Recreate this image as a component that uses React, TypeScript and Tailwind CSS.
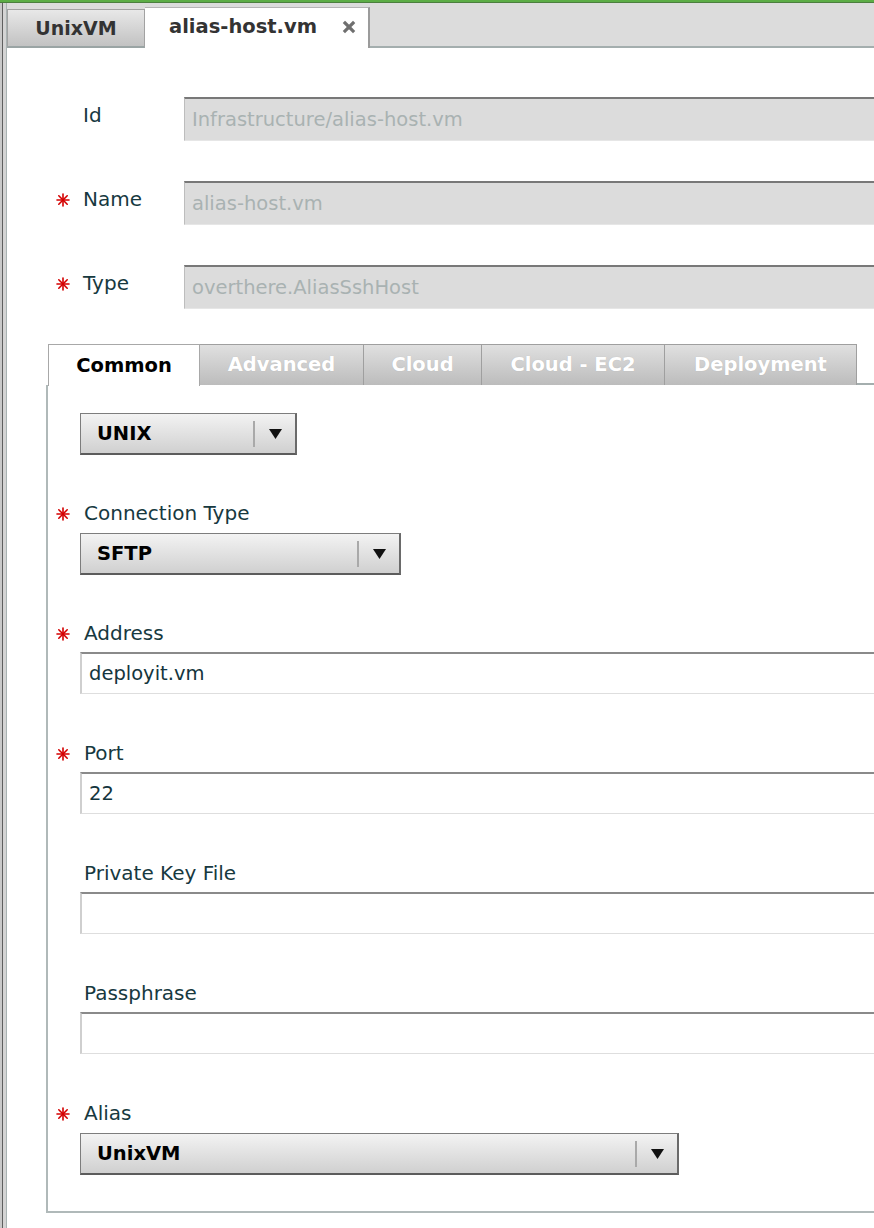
import React from "react";

const Star = () => (
  <svg width="14" height="14" viewBox="0 0 14 14" className="mt-[6px]">
    <g stroke="#d40000" strokeWidth="1.6" strokeLinecap="round">
      <line x1="7" y1="1" x2="7" y2="13" />
      <line x1="1" y1="7" x2="13" y2="7" />
      <line x1="2.8" y1="2.8" x2="11.2" y2="11.2" />
      <line x1="11.2" y1="2.8" x2="2.8" y2="11.2" />
    </g>
  </svg>
);

const Arrow = () => (
  <svg width="13" height="10" viewBox="0 0 13 10">
    <path d="M0 0 H13 L6.5 10 Z" fill="#111" />
  </svg>
);

function Select({ value, width }: { value: string; width: string }) {
  return (
    <div
      className={`flex items-center h-[42px] border border-[#7d7d7d] border-b-2 border-b-[#5c5c5c] border-r-2 border-r-[#6a6a6a] bg-linear-to-b from-[#f3f3f3] to-[#d0d0d0] ${width}`}
    >
      <span className="flex-1 pl-[16px] font-bold text-black text-[19.5px]">{value}</span>
      <span className="w-[2px] h-[26px] bg-[#a9a9a9]" />
      <span className="w-[40px] flex justify-center">
        <Arrow />
      </span>
    </div>
  );
}

function TextInput({ value }: { value?: string }) {
  return (
    <div className="h-[42px] w-[820px] flex items-center pl-[7px] bg-white border-t-2 border-t-[#8a8a8a] border-l-2 border-l-[#cfcfcf] border-b border-b-[#dedede] text-[19.5px] text-[#14353d]">
      {value}
    </div>
  );
}

function FieldLabel({ text, required }: { text: string; required?: boolean }) {
  return (
    <div className="flex h-[24px] items-start">
      <div className="w-[28px] shrink-0">{required && <Star />}</div>
      <span className="text-[20px] leading-[24px] text-[#17393f]">{text}</span>
    </div>
  );
}

function DisabledRow({ label, value, required }: { label: string; value: string; required?: boolean }) {
  return (
    <div className="flex">
      <div className="w-[128px] shrink-0 flex pt-[6px]">
        <div className="w-[27px] shrink-0">{required && <Star />}</div>
        <span className="text-[20px] leading-[24px] text-[#17393f]">{label}</span>
      </div>
      <div className="h-[44px] w-[720px] shrink-0 flex items-center pl-[7px] bg-[#dcdcdc] border-t-2 border-t-[#787878] border-l border-l-[#bdbdbd] border-b border-b-[#e6e6e6] text-[19.5px] text-[#a9b2b2]">
        {value}
      </div>
    </div>
  );
}

const innerTabs = [
  { label: "Advanced", w: "w-[164px]" },
  { label: "Cloud", w: "w-[118px]" },
  { label: "Cloud - EC2", w: "w-[183px]" },
  { label: "Deployment", w: "w-[192px]" },
];

export default function App() {
  return (
    <div className="w-[874px] h-[1228px] bg-white overflow-hidden font-['DejaVu_Sans',sans-serif]">
      {/* top green strip */}
      <div className="h-[2px] bg-[#5cad46]" />
      <div className="h-[1px] bg-[#4b7f3e]" />

      <div className="flex h-[1225px]">
        {/* left window edge */}
        <div className="w-[2px] bg-[#c9c9c9]" />
        <div className="w-[1px] bg-[#5f5f5f]" />
        <div className="w-[3px] bg-[#d4d4d4]" />
        <div className="w-[1px] bg-[#a9b3b3]" />

        <div className="flex-1 flex flex-col overflow-hidden">
          {/* document tab bar */}
          <div className="h-[45px] bg-[#dcdcdc] border-b-2 border-[#a4aeae] flex items-end pt-[4px]">
            <div className="w-[138px] h-[39px] mb-[-2px] flex items-center justify-center border border-[#a2a2a2] border-b-[#9aa4a4] border-b-2 bg-linear-to-b from-[#e8e8e8] to-[#c2c2c2] font-bold text-[19px] text-[#333]">
              UnixVM
            </div>
            <div className="w-[225px] h-[41px] mb-[-2px] flex items-center bg-white border-t border-t-[#b5b5b5] border-r-2 border-r-[#9b9b9b] pl-[24px] pb-[2px]">
              <span className="font-bold text-[19.5px] text-[#333]">alias-host.vm</span>
              <svg width="14" height="14" viewBox="0 0 14 14" className="ml-[25px]">
                <g stroke="#6f6f6f" strokeWidth="3.2" strokeLinecap="square">
                  <line x1="3" y1="3" x2="11" y2="11" />
                  <line x1="11" y1="3" x2="3" y2="11" />
                </g>
              </svg>
            </div>
          </div>

          {/* top form */}
          <div className="pt-[49px] pl-[49px] flex flex-col gap-[40px]">
            <DisabledRow label="Id" value="Infrastructure/alias-host.vm" />
            <DisabledRow label="Name" value="alias-host.vm" required />
            <DisabledRow label="Type" value="overthere.AliasSshHost" required />
          </div>

          {/* inner tabs */}
          <div className="mt-[35px] ml-[39px] flex items-end">
            <div className="w-[152px] h-[42px] ml-[2px] mb-[-1px] flex items-center justify-center bg-white border-t border-l border-r border-[#a8a8a8] font-bold text-[19.5px] text-black relative z-10">
              Common
            </div>
            {innerTabs.map((t) => (
              <div
                key={t.label}
                className={`${t.w} h-[41px] flex items-center justify-center border border-[#9f9f9f] border-l-0 border-b-0 bg-linear-to-b from-[#e0e0e0] to-[#bcbcbc] font-bold text-[19.5px] text-white [text-shadow:0_0_1px_rgba(0,0,0,0.15)]`}
              >
                {t.label}
              </div>
            ))}
            <div className="flex-1 border-b-2 border-[#a4aeae]" />
          </div>

          {/* tab panel */}
          <div className="ml-[39px] border-l-2 border-b-2 border-[#b0b9b9] pl-[8px] pt-[28px] pb-[36px] flex flex-col">
            <div className="ml-[24px]">
              <Select value="UNIX" width="w-[217px]" />
            </div>

            <div className="mt-[46px] flex flex-col gap-[8px]">
              <FieldLabel text="Connection Type" required />
              <div className="ml-[24px]">
                <Select value="SFTP" width="w-[321px]" />
              </div>
            </div>

            <div className="mt-[46px] flex flex-col gap-[7px]">
              <FieldLabel text="Address" required />
              <div className="ml-[24px]">
                <TextInput value="deployit.vm" />
              </div>
            </div>

            <div className="mt-[47px] flex flex-col gap-[7px]">
              <FieldLabel text="Port" required />
              <div className="ml-[24px]">
                <TextInput value="22" />
              </div>
            </div>

            <div className="mt-[47px] flex flex-col gap-[7px]">
              <FieldLabel text="Private Key File" />
              <div className="ml-[24px]">
                <TextInput />
              </div>
            </div>

            <div className="mt-[47px] flex flex-col gap-[7px]">
              <FieldLabel text="Passphrase" />
              <div className="ml-[24px]">
                <TextInput />
              </div>
            </div>

            <div className="mt-[47px] flex flex-col gap-[8px]">
              <FieldLabel text="Alias" required />
              <div className="ml-[24px]">
                <Select value="UnixVM" width="w-[599px]" />
              </div>
            </div>
          </div>
        </div>
      </div>
    </div>
  );
}
